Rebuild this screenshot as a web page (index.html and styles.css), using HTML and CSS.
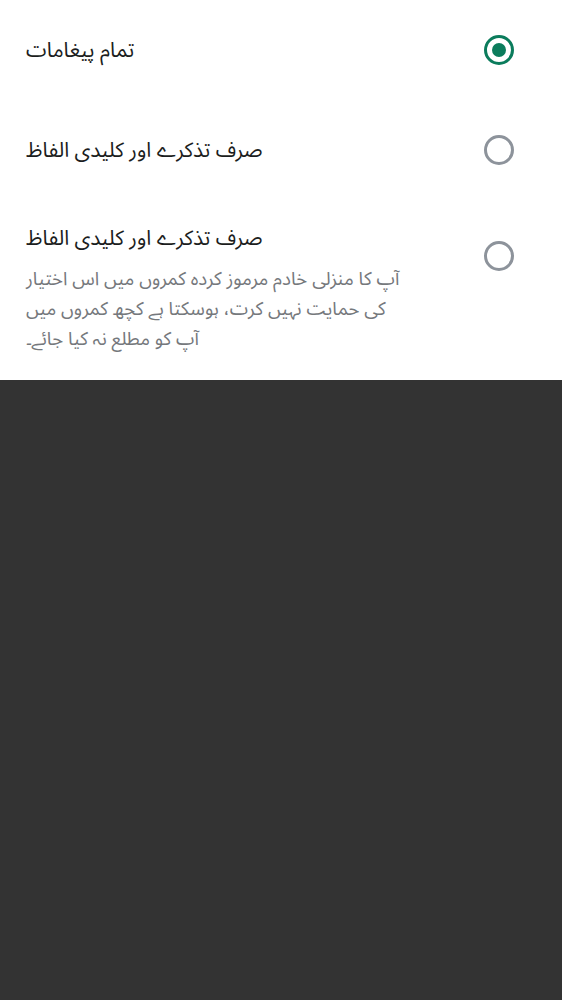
FILE: index.html
```html
<!DOCTYPE html>
<html lang="ur">
<head>
<meta charset="utf-8">
<link rel="stylesheet" href="styles.css">
</head>
<body>
<div class="panel">
  <div class="option">
    <div class="text"><div class="title" dir="rtl">تمام پیغامات</div></div>
    <span class="radio checked"></span>
  </div>
  <div class="option">
    <div class="text"><div class="title" dir="rtl">صرف تذکرے اور کلیدی الفاظ</div></div>
    <span class="radio"></span>
  </div>
  <div class="option tall">
    <div class="text">
      <div class="title" dir="rtl">صرف تذکرے اور کلیدی الفاظ</div>
      <div class="desc" dir="rtl">آپ کا منزلی خادم مرموز کردہ کمروں میں اس اختیار<br>کی حمایت نہیں کرت، ہوسکتا ہے کچھ کمروں میں<br>آپ کو مطلع نہ کیا جائے۔</div>
    </div>
    <span class="radio"></span>
  </div>
</div>
</body>
</html>
```
FILE: styles.css
```css
html, body {
  margin: 0;
  padding: 0;
  background: #333333;
  height: 100%;
}
body {
  font-family: "Noto Sans Arabic", "Noto Naskh Arabic", "DejaVu Sans", sans-serif;
}
.panel {
  background: #ffffff;
  height: 380px;
  display: flex;
  flex-direction: column;
}
.option {
  display: flex;
  align-items: center;
  height: 100px;
  padding: 0 48px 0 26px;
}
.option.tall {
  height: 180px;
  align-items: flex-start;
  padding-top: 22px;
  box-sizing: border-box;
}
.text {
  flex: 1;
  min-width: 0;
}
.title {
  text-align: left;
  font-size: 20.8px;
  line-height: 32px;
  color: #1b1d20;
}
.desc {
  text-align: left;
  font-size: 18.6px;
  line-height: 30px;
  color: #75787c;
  margin-top: 10px;
}
.radio {
  width: 30px;
  height: 30px;
  box-sizing: border-box;
  border: 3px solid #8d939b;
  border-radius: 50%;
  display: flex;
  align-items: center;
  justify-content: center;
  flex: none;
}
.option.tall .radio {
  margin-top: 19px;
}
.radio.checked {
  border-color: #0b7c5c;
}
.radio.checked::after {
  content: "";
  width: 14px;
  height: 14px;
  border-radius: 50%;
  background: #0b7c5c;
}
```
